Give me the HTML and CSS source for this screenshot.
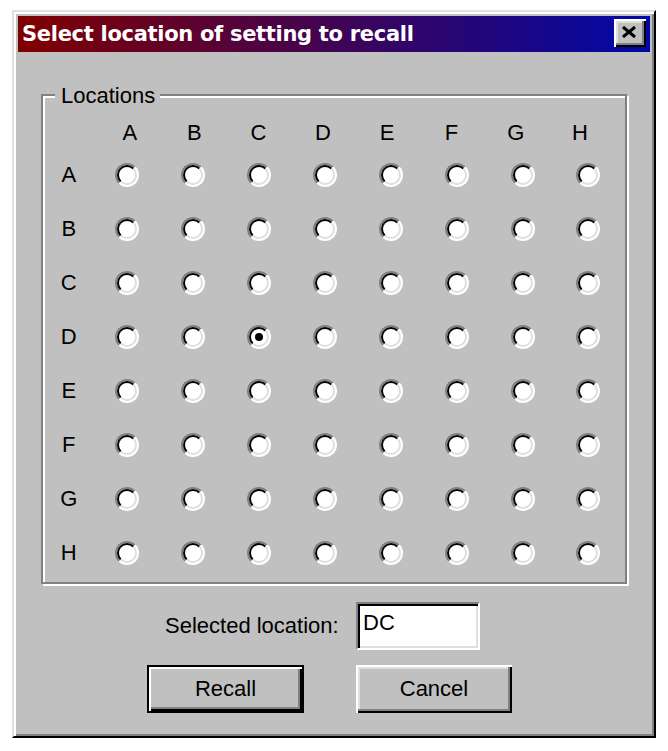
FILE: index.html
```html
<!DOCTYPE html>
<html>
<head>
<meta charset="utf-8">
<link rel="stylesheet" href="styles.css">
</head>
<body>
<div class="window">
  <div class="titlebar">
    <span class="title">Select location of setting to recall</span>
    <div class="close"><svg width="16" height="12" viewBox="0 0 16 12"><path d="M2 1 L14 11 M14 1 L2 11" stroke="#000" stroke-width="3" fill="none"/></svg></div>
  </div>
  <div class="content">
    <div class="group">
      <span class="legend">Locations</span>
      <div class="headers">
        <span>A</span><span>B</span><span>C</span><span>D</span><span>E</span><span>F</span><span>G</span><span>H</span>
      </div>
      <div class="grid">
        <span class="rl">A</span><i class="radio"></i><i class="radio"></i><i class="radio"></i><i class="radio"></i><i class="radio"></i><i class="radio"></i><i class="radio"></i><i class="radio"></i>
        <span class="rl">B</span><i class="radio"></i><i class="radio"></i><i class="radio"></i><i class="radio"></i><i class="radio"></i><i class="radio"></i><i class="radio"></i><i class="radio"></i>
        <span class="rl">C</span><i class="radio"></i><i class="radio"></i><i class="radio"></i><i class="radio"></i><i class="radio"></i><i class="radio"></i><i class="radio"></i><i class="radio"></i>
        <span class="rl">D</span><i class="radio"></i><i class="radio"></i><i class="radio checked"></i><i class="radio"></i><i class="radio"></i><i class="radio"></i><i class="radio"></i><i class="radio"></i>
        <span class="rl">E</span><i class="radio"></i><i class="radio"></i><i class="radio"></i><i class="radio"></i><i class="radio"></i><i class="radio"></i><i class="radio"></i><i class="radio"></i>
        <span class="rl">F</span><i class="radio"></i><i class="radio"></i><i class="radio"></i><i class="radio"></i><i class="radio"></i><i class="radio"></i><i class="radio"></i><i class="radio"></i>
        <span class="rl">G</span><i class="radio"></i><i class="radio"></i><i class="radio"></i><i class="radio"></i><i class="radio"></i><i class="radio"></i><i class="radio"></i><i class="radio"></i>
        <span class="rl">H</span><i class="radio"></i><i class="radio"></i><i class="radio"></i><i class="radio"></i><i class="radio"></i><i class="radio"></i><i class="radio"></i><i class="radio"></i>
      </div>
    </div>
    <div class="selrow">
      <span class="sellabel">Selected location:</span>
      <div class="textbox">DC</div>
    </div>
    <div class="buttons">
      <div class="btn default">Recall</div>
      <div class="btn">Cancel</div>
    </div>
  </div>
</div>
</body>
</html>
```
FILE: styles.css
```css
* { box-sizing: border-box; }
html, body { margin: 0; padding: 0; background: #fff; }
body { font-family: "Liberation Sans", Arial, sans-serif; font-size: 22px; color: #000; }

.window {
  margin: 10px 0 0 12px;
  width: 644px;
  height: 728px;
  background: #c0c0c0;
  border: 2px solid;
  border-color: #dfdfdf #000 #000 #dfdfdf;
  box-shadow: inset 2px 2px 0 #fff, inset -2px -2px 0 #808080;
  padding: 4px;
}

.titlebar {
  height: 36px;
  background: linear-gradient(to right, #800000, #0008a8);
  display: flex;
  align-items: center;
  justify-content: space-between;
  padding: 0 4px 0 4px;
}
.title {
  font-family: "DejaVu Sans", Verdana, sans-serif;
  font-weight: bold;
  font-size: 21px;
  color: #fff;
  line-height: 24px;
  white-space: nowrap;
  letter-spacing: -0.3px;
}
.close {
  width: 32px;
  height: 28px;
  margin-top: -2px;
  background: #c0c0c0;
  box-shadow: inset 2px 2px 0 #fff, inset -2px -2px 0 #000, inset -4px -4px 0 #808080, inset 4px 4px 0 #dfdfdf;
  display: flex;
  align-items: center;
  justify-content: center;
  padding: 0 2px 2px 0;
}

.content { padding: 0; }

.group {
  position: relative;
  margin: 42px 0 0 23px;
  width: 586px;
  height: 490px;
  border: 2px solid #808080;
  box-shadow: 2px 2px 0 #fff, inset 2px 2px 0 #fff;
}
.legend {
  position: absolute;
  left: 12px;
  top: -12px;
  padding: 0 5px 0 6px;
  background: #c0c0c0;
  line-height: 24px;
}

.headers {
  margin: 25px 0 0 54.8px;
  display: grid;
  grid-template-columns: repeat(8, 64.3px);
  line-height: 24px;
  height: 24px;
}
.headers span { text-align: center; }

.grid {
  margin-top: 3px;
  display: grid;
  grid-template-columns: 51.5px repeat(8, 65.86px);
  grid-auto-rows: 54px;
  align-items: center;
  justify-items: center;
  line-height: 24px;
}

.radio {
  display: block;
  position: relative;
  width: 24px;
  height: 24px;
  border-radius: 50%;
  border: 2px solid;
  border-color: #808080 #fff #fff #808080;
  background: #fff;
}
.radio::before {
  content: "";
  position: absolute;
  left: 0; top: 0; right: 0; bottom: 0;
  border-radius: 50%;
  border: 2px solid;
  border-color: #000 #dfdfdf #dfdfdf #000;
}
.radio.checked::after {
  content: "";
  position: absolute;
  left: 6px; top: 6px;
  width: 8px; height: 8px;
  border-radius: 50%;
  background: #000;
}

.selrow {
  margin: 18px 0 0 147px;
  display: flex;
  align-items: center;
}
.sellabel { width: 191px; }
.textbox {
  width: 124px;
  height: 48px;
  background: #fff;
  border: 2px solid;
  border-color: #808080 #fff #fff #808080;
  box-shadow: inset 2px 2px 0 #000, inset -2px -2px 0 #dfdfdf;
  padding: 7px 0 0 5px;
  line-height: 24px;
}

.buttons {
  margin: 15px 0 0 129px;
  display: flex;
  gap: 52px;
}
.btn {
  width: 156px;
  height: 48px;
  background: #c0c0c0;
  box-shadow: inset 2px 2px 0 #fff, inset -2px -2px 0 #000, inset -4px -4px 0 #808080, inset 4px 4px 0 #dfdfdf;
  display: flex;
  align-items: center;
  justify-content: center;
  line-height: 24px;
}
.btn.default {
  width: 157px;
  border: 2px solid #000;
  box-shadow: inset 2px 2px 0 #fff, inset -2px -2px 0 #000, inset -4px -4px 0 #808080;
}
```
